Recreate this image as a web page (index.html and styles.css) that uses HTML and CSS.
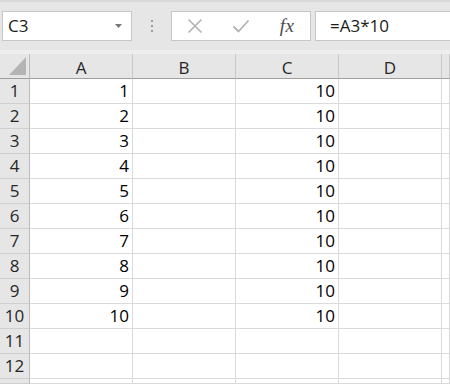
FILE: index.html
```html
<!DOCTYPE html>
<html>
<head>
<meta charset="utf-8">
<link rel="stylesheet" href="styles.css">
</head>
<body>
<div class="toolbar">
  <div class="namebox">
    <span class="name">C3</span>
    <svg class="caret" width="7" height="4" viewBox="0 0 7 4"><path d="M0 0H7L3.5 4Z" fill="#777"/></svg>
  </div>
  <div class="grip"><i></i><i></i><i></i></div>
  <div class="fbtns">
    <span class="slot"><svg width="16" height="16" viewBox="0 0 16 16"><path d="M1.5 1.5L14.5 14.5M14.5 1.5L1.5 14.5" stroke="#b3b3b3" stroke-width="1.6" fill="none"/></svg></span>
    <span class="slot"><svg width="18" height="14" viewBox="0 0 18 14"><path d="M1.5 7.5L6.5 12.5L16.5 1.5" stroke="#b3b3b3" stroke-width="1.8" fill="none"/></svg></span>
    <span class="slot fx">fx</span>
  </div>
  <div class="formula">=A3*10</div>
</div>
<div class="strip"></div>
<div class="sheet">
  <div class="hd corner"><svg width="18" height="19" viewBox="0 0 18 19"><path d="M17 0V18H0Z" fill="#b4b4b4"/></svg></div>
  <div class="hd col">A</div><div class="hd col">B</div><div class="hd col">C</div><div class="hd col">D</div><div class="hd col"></div>

  <div class="rh">1</div><div class="c">1</div><div class="c"></div><div class="c">10</div><div class="c"></div><div class="c"></div>
  <div class="rh">2</div><div class="c">2</div><div class="c"></div><div class="c">10</div><div class="c"></div><div class="c"></div>
  <div class="rh">3</div><div class="c">3</div><div class="c"></div><div class="c">10</div><div class="c"></div><div class="c"></div>
  <div class="rh">4</div><div class="c">4</div><div class="c"></div><div class="c">10</div><div class="c"></div><div class="c"></div>
  <div class="rh">5</div><div class="c">5</div><div class="c"></div><div class="c">10</div><div class="c"></div><div class="c"></div>
  <div class="rh">6</div><div class="c">6</div><div class="c"></div><div class="c">10</div><div class="c"></div><div class="c"></div>
  <div class="rh">7</div><div class="c">7</div><div class="c"></div><div class="c">10</div><div class="c"></div><div class="c"></div>
  <div class="rh">8</div><div class="c">8</div><div class="c"></div><div class="c">10</div><div class="c"></div><div class="c"></div>
  <div class="rh">9</div><div class="c">9</div><div class="c"></div><div class="c">10</div><div class="c"></div><div class="c"></div>
  <div class="rh">10</div><div class="c">10</div><div class="c"></div><div class="c">10</div><div class="c"></div><div class="c"></div>
  <div class="rh">11</div><div class="c"></div><div class="c"></div><div class="c"></div><div class="c"></div><div class="c"></div>
  <div class="rh">12</div><div class="c"></div><div class="c"></div><div class="c"></div><div class="c"></div><div class="c"></div>
  <div class="rh"></div><div class="c"></div><div class="c"></div><div class="c"></div><div class="c"></div><div class="c"></div>
</div>
</body>
</html>
```
FILE: styles.css
```css
* { box-sizing: border-box; }
html, body { margin: 0; padding: 0; }
body {
  width: 450px;
  height: 384px;
  overflow: hidden;
  background: #ffffff;
  font-family: "Open Sans", "Liberation Sans", sans-serif;
  font-size: 17px;
  color: #000;
}
.toolbar {
  height: 50px;
  background: #e6e6e6;
  border-top: 2px solid #d9d9d9;
  padding-top: 9px;
  display: flex;
  align-items: flex-start;
}
.namebox {
  margin-left: 2px;
  width: 130px;
  height: 30px;
  background: #fff;
  border: 1px solid #c6c6c6;
  display: flex;
  align-items: center;
  justify-content: space-between;
  padding: 0 9px 0 5px;
}
.name { line-height: 28px; color: #1a1a1a; }
.caret { display: block; }
.grip {
  width: 39px;
  height: 30px;
  display: flex;
  flex-direction: column;
  align-items: center;
  justify-content: center;
  gap: 3px;
}
.grip i {
  display: block;
  width: 2px;
  height: 2px;
  background: #9a9a9a;
}
.fbtns {
  width: 140px;
  height: 30px;
  background: #fff;
  border: 1px solid #c6c6c6;
  display: flex;
}
.slot {
  flex: 1;
  display: flex;
  align-items: center;
  justify-content: center;
}
.fx {
  font-family: "Liberation Serif", serif;
  font-style: italic;
  font-size: 19px;
  color: #4a4a4a;
  letter-spacing: 0.5px;
}
.formula {
  margin-left: 4px;
  flex: 1;
  height: 30px;
  background: #fff;
  border: 1px solid #c6c6c6;
  border-right: none;
  padding-left: 14px;
  line-height: 28px;
  color: #1a1a1a;
}
.strip {
  height: 4px;
  background: #eeeeee;
}
.sheet {
  display: grid;
  grid-template-columns: 30px repeat(4, 103px) 1fr;
  grid-template-rows: repeat(13, 25px) 5px;
  overflow: hidden;
}
.hd {
  background: #e6e6e6;
  border-right: 1px solid #c8c8c8;
  border-bottom: 1px solid #9e9e9e;
  text-align: center;
  line-height: 24px;
  padding-top: 2px;
  color: #262626;
}
.corner {
  display: flex;
  align-items: flex-end;
  justify-content: flex-end;
  padding: 0 2px 2px 0;
  border-right: 1px solid #bcbcbc;
}
.corner svg { display: block; }
.rh {
  background: #e6e6e6;
  border-right: 1px solid #bcbcbc;
  border-bottom: 1px solid #cfcfcf;
  text-align: center;
  line-height: 24px;
  color: #262626;
  overflow: hidden;
}
.c {
  background: #fff;
  border-right: 1px solid #dadada;
  border-bottom: 1px solid #dadada;
  text-align: right;
  padding-right: 3px;
  line-height: 24px;
  overflow: hidden;
}
```
